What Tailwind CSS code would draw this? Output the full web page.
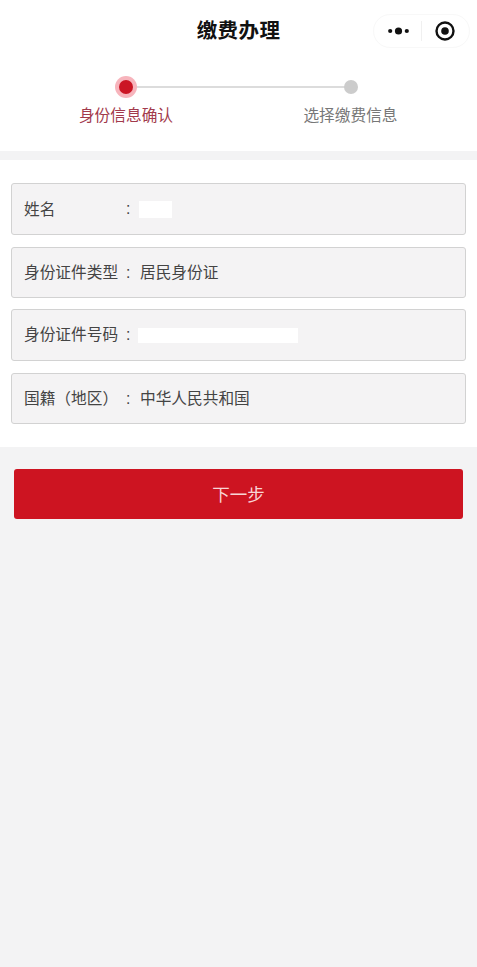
<!DOCTYPE html>
<html lang="zh-CN">
<head>
    <meta charset="UTF-8">
    <meta name="viewport" content="width=device-width, initial-scale=1.0">
    <title>缴费办理</title>
    <script src="https://cdn.jsdelivr.net/npm/@tailwindcss/browser@4"></script>
</head>
<body class="bg-[#f3f3f4] min-h-screen font-['Liberation_Sans','Noto_Sans_CJK_SC',sans-serif]">

    <!-- 顶部导航 + 步骤条 -->
    <div class="bg-white h-[151px]">
        <div class="relative h-[62px]">
            <h1 class="pt-[17px] text-center text-[20.5px] leading-[28px] font-bold tracking-[0.4px] text-[#111]">缴费办理</h1>
            <div class="absolute left-[373px] top-[14px] w-[97px] h-[34px] rounded-full border border-[#f8f8f8] flex items-center">
                <svg class="ml-[14px]" width="21" height="8" viewBox="0 0 21 8"><circle cx="2.2" cy="4" r="2.1" fill="#111"/><circle cx="10.5" cy="4" r="3.6" fill="#111"/><circle cx="18.8" cy="4" r="2.1" fill="#111"/></svg>
                <div class="ml-[12px] w-px h-[20px] bg-[#f0f0f0]"></div>
                <svg class="ml-[13px]" width="20" height="20" viewBox="0 0 20 20"><circle cx="10" cy="10" r="8.5" fill="none" stroke="#111" stroke-width="2.4"/><circle cx="10" cy="10" r="3.8" fill="#111"/></svg>
            </div>
        </div>
        <div class="relative flex pt-[14px]">
            <div class="absolute left-[126px] right-[126px] top-[24px] h-[2px] bg-[#dcdcdc]"></div>
            <div class="relative flex flex-col items-center w-[252px]">
                <div class="w-[22px] h-[22px] rounded-full bg-[#f7b4bc] flex items-center justify-center">
                    <div class="w-[14px] h-[14px] rounded-full bg-[#cb1524]"></div>
                </div>
                <span class="mt-[6px] text-[15.7px] leading-[24px] text-[#a23a4c]">身份信息确认</span>
            </div>
            <div class="relative flex flex-col items-center w-[197px]">
                <div class="mt-[4px] w-[14px] h-[14px] rounded-full bg-[#cccccc]"></div>
                <span class="mt-[10px] text-[15.7px] leading-[24px] text-[#777]">选择缴费信息</span>
            </div>
        </div>
    </div>

    <!-- 身份信息 -->
    <div class="mt-[9px] bg-white h-[287px] px-[11px] pt-[23px] flex flex-col">
        <div class="h-[52px] flex items-center px-[12px] bg-[#f4f3f4] border border-[#d2d2d2] rounded-[3px] text-[15.7px] text-[#444]">
            <span class="w-[96px] relative top-px">姓名</span><span class="w-[19px] pl-[6px]">:</span>
            <span class="w-[33px] h-[17px] bg-white"></span>
        </div>
        <div class="mt-[12px] h-[51px] flex items-center px-[12px] bg-[#f4f3f4] border border-[#d2d2d2] rounded-[3px] text-[15.7px] text-[#444]">
            <span class="w-[96px] whitespace-nowrap">身份证件类型</span><span class="w-[20px] pl-[6px]">:</span>
            <span>居民身份证</span>
        </div>
        <div class="mt-[11px] h-[52px] flex items-center px-[12px] bg-[#f4f3f4] border border-[#d2d2d2] rounded-[3px] text-[15.7px] text-[#444]">
            <span class="w-[96px] whitespace-nowrap">身份证件号码</span><span class="w-[18px] pl-[6px]">:</span>
            <span class="w-[160px] h-[15px] bg-white"></span>
        </div>
        <div class="mt-[12px] h-[51px] flex items-center px-[12px] bg-[#f4f3f4] border border-[#d2d2d2] rounded-[3px] text-[15.7px] text-[#444]">
            <span class="w-[96px] whitespace-nowrap">国籍（地区）</span><span class="w-[20px] pl-[6px]">:</span>
            <span>中华人民共和国</span>
        </div>
    </div>

    <!-- 下一步 -->
    <div class="px-[14px] pt-[22px]">
        <button class="w-full h-[50px] pt-[3px] rounded-[3px] bg-[#cd1421] text-[17.5px] text-[#f8d5d5]">下一步</button>
    </div>

</body>
</html>
